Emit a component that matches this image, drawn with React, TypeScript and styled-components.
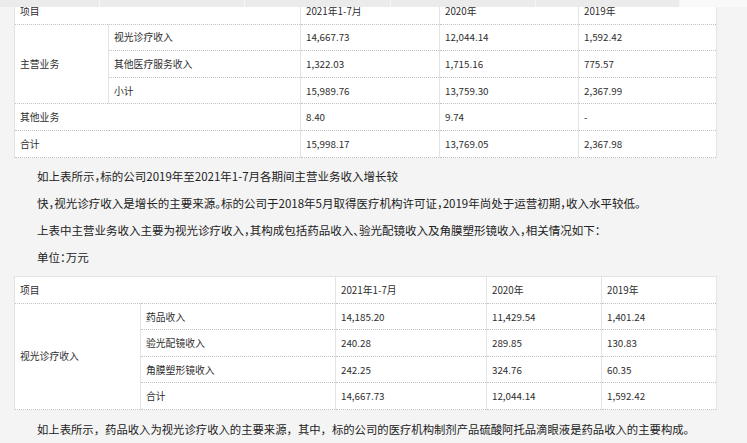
import React from "react";
import styled, { createGlobalStyle } from "styled-components";

const GlobalStyle = createGlobalStyle`
  html, body { margin: 0; padding: 0; }
  body {
    background: #f4f4f4;
    font-family: "Noto Sans CJK SC", "Noto Sans", sans-serif;
    color: #333;
  }
`;

const Page = styled.div`
  position: relative;
  width: 747px;
  height: 443px;
  overflow: hidden;
`;

const StickyStrip = styled.div`
  position: absolute;
  top: 0;
  left: 0;
  right: 0;
  height: 7px;
  display: flex;
  z-index: 2;
`;

const StripCell = styled.div<{ $w: number; $last?: boolean }>`
  flex: ${(p) => (p.$last ? "1 1 auto" : `0 0 ${p.$w}px`)};
  background: ${(p) => (p.$last ? "#f9f9f9" : "#ebebeb")};
  border-right: ${(p) => (p.$last ? "none" : "1px solid #f6f6f6")};
  box-sizing: border-box;
`;

const Content = styled.div`
  display: flex;
  flex-direction: column;
  padding-left: 14px;
`;

const Table = styled.table<{ $mt?: number }>`
  width: 702px;
  border-collapse: collapse;
  table-layout: fixed;
  background: #fff;
  margin-top: ${(p) => p.$mt ?? 0}px;
  border-top: 1px solid #e3e3e3;
  border-left: 1px solid #e3e3e3;
  font-size: 9.8px;
  color: #2e2e2e;
`;

const Cell = styled.td`
  height: 26.6px;
  box-sizing: border-box;
  padding: 2px 5px 0 5px;
  vertical-align: middle;
  text-align: left;
  white-space: nowrap;
  border-right: 1px solid #e3e3e3;
  border-bottom: 1px dotted #c2c2c2;
  line-height: 1;
`;

const Paras = styled.div<{ $pt: number; $pb: number }>`
  display: flex;
  flex-direction: column;
  padding: ${(p) => p.$pt}px 0 ${(p) => p.$pb}px 23px;
`;

const Para = styled.p<{ $size?: number; $half?: boolean }>`
  margin: 0;
  line-height: 27px;
  font-size: ${(p) => p.$size ?? 11.5}px;
  color: #222;
  white-space: nowrap;
  font-feature-settings: ${(p) => (p.$half ? '"halt" 1' : "normal")};
`;

const stripWidths = [100, 145, 146, 145, 144];

type Row = { cells: { text: string; colSpan?: number; rowSpan?: number }[] };

const table1: Row[] = [
  { cells: [{ text: "项目", colSpan: 2 }, { text: "2021年1-7月" }, { text: "2020年" }, { text: "2019年" }] },
  { cells: [{ text: "主营业务", rowSpan: 3 }, { text: "视光诊疗收入" }, { text: "14,667.73" }, { text: "12,044.14" }, { text: "1,592.42" }] },
  { cells: [{ text: "其他医疗服务收入" }, { text: "1,322.03" }, { text: "1,715.16" }, { text: "775.57" }] },
  { cells: [{ text: "小计" }, { text: "15,989.76" }, { text: "13,759.30" }, { text: "2,367.99" }] },
  { cells: [{ text: "其他业务", colSpan: 2 }, { text: "8.40" }, { text: "9.74" }, { text: "-" }] },
  { cells: [{ text: "合计", colSpan: 2 }, { text: "15,998.17" }, { text: "13,769.05" }, { text: "2,367.98" }] },
];

const table2: Row[] = [
  { cells: [{ text: "项目", colSpan: 2 }, { text: "2021年1-7月" }, { text: "2020年" }, { text: "2019年" }] },
  { cells: [{ text: "视光诊疗收入", rowSpan: 4 }, { text: "药品收入" }, { text: "14,185.20" }, { text: "11,429.54" }, { text: "1,401.24" }] },
  { cells: [{ text: "验光配镜收入" }, { text: "240.28" }, { text: "289.85" }, { text: "130.83" }] },
  { cells: [{ text: "角膜塑形镜收入" }, { text: "242.25" }, { text: "324.76" }, { text: "60.35" }] },
  { cells: [{ text: "合计" }, { text: "14,667.73" }, { text: "12,044.14" }, { text: "1,592.42" }] },
];

function DataTable({ rows, cols, mt }: { rows: Row[]; cols: number[]; mt?: number }) {
  return (
    <Table $mt={mt}>
      <colgroup>
        {cols.map((w, i) => (
          <col key={i} style={{ width: w }} />
        ))}
      </colgroup>
      <tbody>
        {rows.map((r, i) => (
          <tr key={i}>
            {r.cells.map((c, j) => (
              <Cell key={j} colSpan={c.colSpan} rowSpan={c.rowSpan}>
                {c.text}
              </Cell>
            ))}
          </tr>
        ))}
      </tbody>
    </Table>
  );
}

export default function App() {
  return (
    <Page>
      <GlobalStyle />
      <StickyStrip>
        {stripWidths.map((w, i) => (
          <StripCell key={i} $w={w} />
        ))}
        <StripCell $w={0} $last />
      </StickyStrip>
      <Content>
        <DataTable rows={table1} cols={[94, 192, 139, 139, 138]} mt={-3} />
        <Paras $pt={5.5} $pb={5}>
          <Para $half>如上表所示，标的公司2019年至2021年1-7月各期间主营业务收入增长较</Para>
          <Para $half>快，视光诊疗收入是增长的主要来源。标的公司于2018年5月取得医疗机构许可证，2019年尚处于运营初期，收入水平较低。</Para>
          <Para $half>上表中主营业务收入主要为视光诊疗收入，其构成包括药品收入、验光配镜收入及角膜塑形镜收入，相关情况如下：</Para>
          <Para $half>单位：万元</Para>
        </Paras>
        <DataTable rows={table2} cols={[126, 195, 151, 115, 115]} />
        <Paras $pt={5.5} $pb={0}>
          <Para $size={11.35}>如上表所示，药品收入为视光诊疗收入的主要来源，其中，标的公司的医疗机构制剂产品硫酸阿托品滴眼液是药品收入的主要构成。</Para>
        </Paras>
      </Content>
    </Page>
  );
}
